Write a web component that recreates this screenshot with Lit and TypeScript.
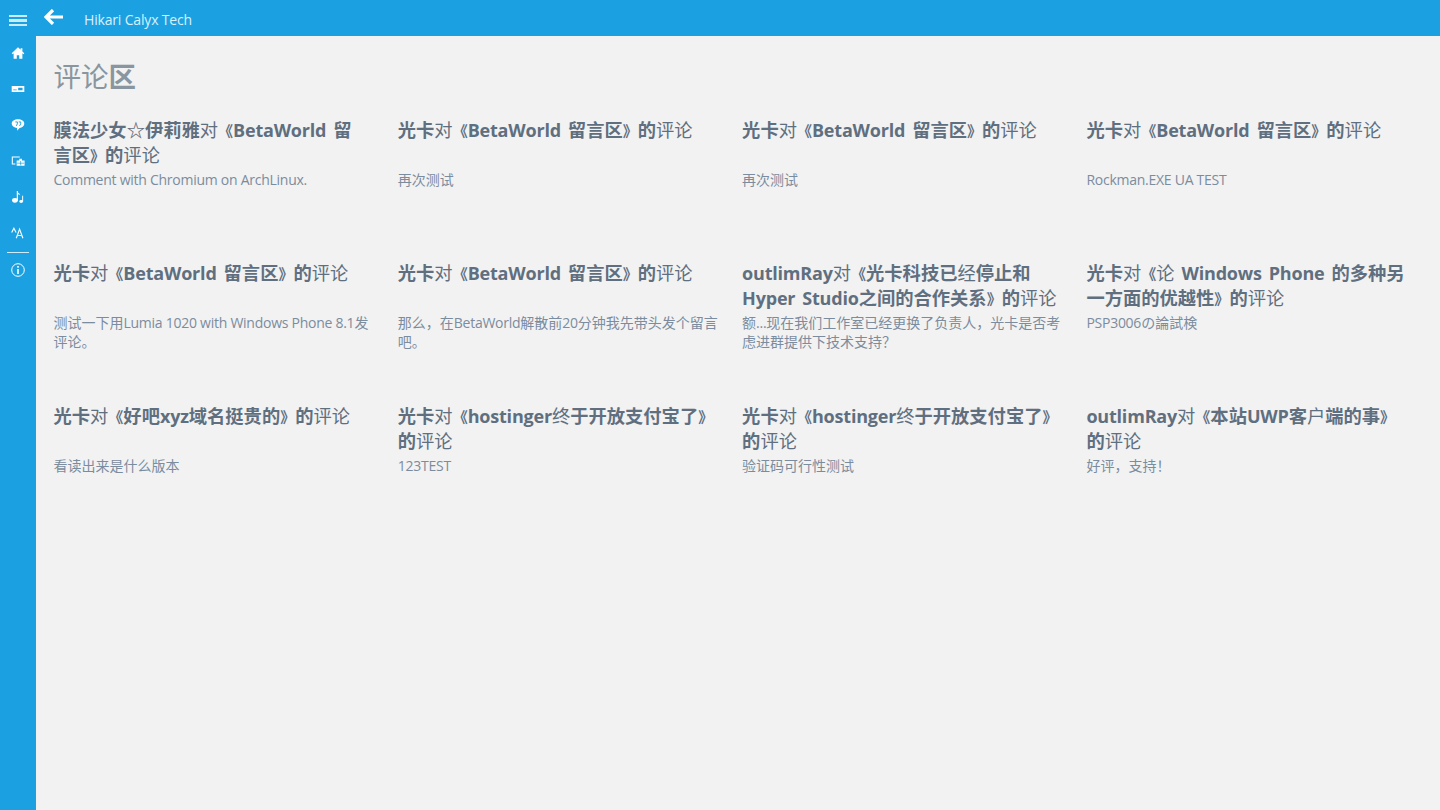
import { LitElement, html, css, svg } from "lit";
import { customElement } from "lit/decorators.js";

const THIN = "评论对经终户";
const items: [string, string][] = [
  ["膜法少女☆伊莉雅对《BetaWorld 留\n言区》的评论", "Comment with Chromium on ArchLinux."],
  ["光卡对《BetaWorld 留言区》的评论", "再次测试"],
  ["光卡对《BetaWorld 留言区》的评论", "再次测试"],
  ["光卡对《BetaWorld 留言区》的评论", "Rockman.EXE UA TEST"],
  ["光卡对《BetaWorld 留言区》的评论", "测试一下用Lumia 1020 with Windows Phone 8.1发评论。"],
  ["光卡对《BetaWorld 留言区》的评论", "那么，在BetaWorld解散前20分钟我先带头发个留言吧。"],
  ["outlimRay对《光卡科技已经停止和 Hyper Studio之间的合作关系》的评论", "额...现在我们工作室已经更换了负责人，光卡是否考虑进群提供下技术支持？"],
  ["光卡对《论 Windows Phone 的多种另一方面的优越性》的评论", "PSP3006の論試検"],
  ["光卡对《好吧xyz域名挺贵的》的评论", "看读出来是什么版本"],
  ["光卡对《hostinger终于开放支付宝了》的评论", "123TEST"],
  ["光卡对《hostinger终于开放支付宝了》的评论", "验证码可行性测试"],
  ["outlimRay对《本站UWP客户端的事》的评论", "好评，支持！"],
];

const icons = [
  svg`<path d="M8 1.500 .8 8.300l1 1L3 8.200V14.500h3.600v-4h2.800v4H13V8.200l1.200 1.100 1-1L13 6.200V2.500h-2v1.800z" fill="#fff"/>`,
  svg`<path d="M.8 4.500h14.400v7H.8zM8.200 6.500v3h5v-3zM2.500 8.500h4v1h-4z" fill="#fff" fill-rule="evenodd"/>`,
  svg`<path d="M8 1.500c4 0 7.200 2 7.200 5 0 2.600-2.400 4.500-5.400 4.900L7 14.500v-3.100C3.400 11 .8 9.100 .8 6.500c0-3 3.200-5 7.200-5z" fill="#fff"/><path d="M5 4.500h2.300v2.200L6 9M8.800 4.500h2.300v2.200L9.800 9" stroke="#1ba1e2" stroke-width="1.100" fill="none"/>`,
  svg`<path d="M10 3.500H1.500v8H5" fill="none" stroke="#fff" stroke-width="1.200"/><path d="M6.500 7.500h9v6h-9zM9.500 5.500h3v2h-3z" fill="#fff"/><path d="M11 8v5M7 10.500h8" stroke="#1ba1e2" stroke-width=".8"/>`,
  svg`<path d="M7.300 1v11" stroke="#fff" stroke-width="1.400" fill="none"/><ellipse cx="4.500" cy="11.800" rx="3.300" ry="2.700" fill="#fff"/><path d="M7 1c.6 2.600 3.200 2 3.600 5-1-.9-2.400-1.200-3.600-.9z" fill="#fff"/><path d="M13.300 6.500v7" stroke="#fff" stroke-width="1.100" fill="none"/><ellipse cx="11.600" cy="13.200" rx="2.100" ry="1.700" fill="#fff"/>`,
  svg`<path d="M.8 7.500l2.500-5 2.500 5M6 14l3.800-10.500L13.600 14M7.300 10.800h5" fill="none" stroke="#fff" stroke-width="1.300"/>`,
];

@customElement("app-root")
export class AppRoot extends LitElement {
  static styles = css`
    :host { display: block; height: 810px; background: #f2f2f2; font-family: "Open Sans", "Noto Sans CJK SC", sans-serif; overflow: hidden; }
    .top { height: 36px; background: #1ba1e2; display: flex; align-items: center; color: #fff; }
    .burger { width: 36px; height: 36px; display: flex; flex-direction: column; gap: 2px; align-items: center; justify-content: center; padding-top: 5px; box-sizing: border-box; }
    .burger i { display: block; width: 18px; height: 2.500px; background: #c9ebfa; }
    .back { display: block; margin-left: 8px; margin-top: -3px; }
    .brand { font-size: 14px; margin-left: 20px; margin-top: 2px; color: #d9f0fb; letter-spacing: -0.17px; }
    .body { display: flex; height: 774px; }
    .side { width: 36px; background: #1ba1e2; flex: none; display: flex; flex-direction: column; align-items: center; }
    .side button { all: unset; width: 36px; height: 36px; padding-bottom: 3px; box-sizing: border-box; display: flex; align-items: center; justify-content: center; }
    .side svg { display: block; }
    .sep { width: 22px; height: 1px; background: #cfeafa; flex: none; }
    main { flex: 1; padding: 21px 0 0 17.500px; }
    h1 { margin: 0 0 20px; font-size: 27.500px; line-height: 40px; font-weight: 700; color: #8a969f; height: 40px; }
    .grid { display: grid; grid-template-columns: repeat(4, 344.300px); grid-auto-rows: 143px; }
    .card { padding-right: 24px; box-sizing: border-box; }
    h2 { margin: 0; font-size: 18.300px; line-height: 25px; height: 53px; font-weight: 700; color: #5f6f7f; white-space: pre-line; }
    h2 span { line-height: 1; }
    h2 .lat { font-size: 18px; letter-spacing: -0.2px; word-spacing: 2.500px; }
    h2 .q { font-size: 15px; }
    .thin { font-weight: 400; }
    p { margin: 0; font-size: 14px; line-height: 19px; color: #7b8c9e; }
    p .lat { letter-spacing: -0.26px; }
  `;

  private rich(text: string) {
    return text.split(/([\x20-\x7e]+|.)/u).filter(Boolean).map((s) => {
      if (s === "《" || s === "》") return html`<span class="q">${s}</span>`;
      if (THIN.includes(s)) return html`<span class="thin">${s}</span>`;
      if (/^[\x20-\x7e]+$/.test(s)) return html`<span class="lat">${s}</span>`;
      return s;
    });
  }

  render() {
    return html`
      <div class="top">
        <div class="burger"><i></i><i></i><i></i></div>
        <svg class="back" width="20" height="16" viewBox="0 0 20 16"><path d="M9 1 2 8l7 7M3 8h16" fill="none" stroke="#fff" stroke-width="3.200"/></svg>
        <span class="brand">Hikari Calyx Tech</span>
      </div>
      <div class="body">
        <nav class="side">
          ${icons.map((p) => html`<button><svg width="14" height="14" viewBox="0 0 16 16">${p}</svg></button>`)}
          <div class="sep"></div>
          <button><svg width="16" height="16" viewBox="0 0 16 16"><circle cx="8" cy="8" r="6.300" fill="none" stroke="#fff"/><path d="M8 7v5M8 4v1.700" stroke="#fff" stroke-width="1.600"/></svg></button>
        </nav>
        <main>
          <h1>${this.rich("评论区")}</h1>
          <div class="grid">
            ${items.map(([t, d]) => html`<div class="card"><h2>${this.rich(t)}</h2><p>${this.rich(d)}</p></div>`)}
          </div>
        </main>
      </div>
    `;
  }
}
